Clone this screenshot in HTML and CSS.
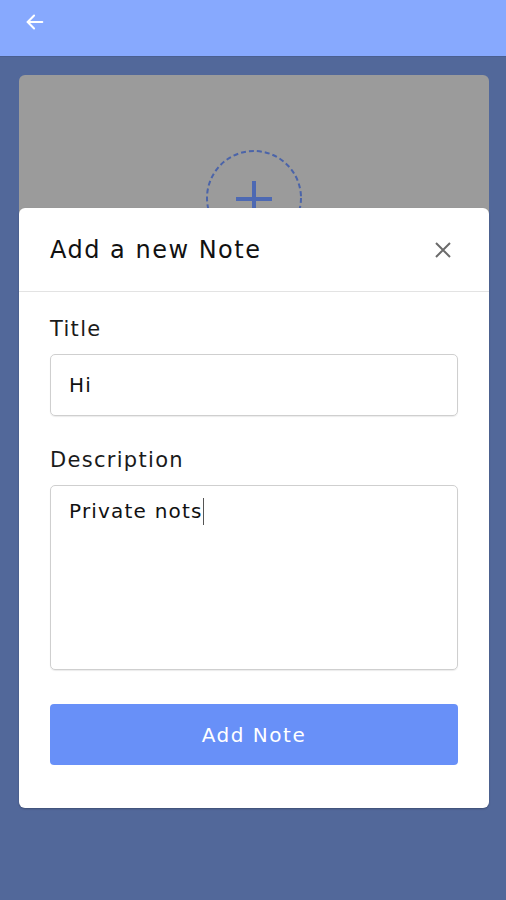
FILE: index.html
```html
<!DOCTYPE html>
<html lang="en">
<head>
    <meta charset="UTF-8">
    <meta name="viewport" content="width=device-width, initial-scale=1.0">
    <title>Notes - Add Note</title>
    <link rel="stylesheet" href="styles.css">
</head>
<body>
<!-- Top bar -->
<div class="topbar">
    <svg class="back" width="22" height="22" viewBox="0 0 24 24" fill="none" stroke="#ffffff" stroke-width="2.2" stroke-linecap="round" stroke-linejoin="round">
        <path d="M20 12H4"/>
        <path d="M11 5l-7 7 7 7"/>
    </svg>
</div>

<!-- Page content behind the dialog -->
<div class="page">
    <div class="image-card">
        <div class="upload">
            <svg width="98" height="98" viewBox="0 0 98 98" fill="none">
                <circle cx="49" cy="49" r="47" stroke="#4b64a9" stroke-width="2" stroke-dasharray="5 3"/>
                <path d="M49 32v36M31 50h36" stroke="#4d69b3" stroke-width="4"/>
            </svg>
        </div>
    </div>

    <!-- Dialog -->
    <div class="modal">
        <div class="modal-header">
            <h2>Add a new Note</h2>
            <svg class="close" width="18" height="18" viewBox="0 0 18 18" stroke="#6b6b6b" stroke-width="2">
                <path d="M2 2l14 14M16 2L2 16"/>
            </svg>
        </div>
        <div class="modal-body">
            <label class="label">Title</label>
            <div class="input">Hi</div>

            <label class="label">Description</label>
            <div class="input textarea">Private nots<span class="caret"></span></div>

            <div class="btn">Add Note</div>
        </div>
    </div>
</div>
</body>
</html>
```

FILE: styles.css
```css
* {
    box-sizing: border-box;
    margin: 0;
    padding: 0;
}
body {
    font-family: 'DejaVu Sans', 'Noto Sans', sans-serif;
    background-color: #52689a;
    width: 506px;
    height: 900px;
    overflow: hidden;
}

/* Top bar */
.topbar {
    height: 57px;
    background-color: #87a9fe;
    border-bottom: 1px solid #4a5f90;
    padding: 11px 0 0 24px;
}

/* Page */
.page {
    position: relative;
    padding: 18px 17px 0 19px;
    height: 843px;
}
.image-card {
    height: 260px;
    background-color: #9b9b9b;
    border-radius: 6px;
    display: flex;
    justify-content: center;
    padding-top: 74px;
}

/* Dialog */
.modal {
    position: absolute;
    top: 151px;
    left: 19px;
    right: 17px;
    height: 600px;
    background-color: #ffffff;
    border-radius: 6px;
    box-shadow: 0 1px 2px rgba(0, 0, 0, 0.25);
}
.modal-header {
    height: 84px;
    display: flex;
    align-items: center;
    justify-content: space-between;
    padding: 0 37px 0 31px;
    border-bottom: 1px solid #e3e3e3;
}
.modal-header h2 {
    font-size: 24px;
    font-weight: 400;
    color: #111111;
    letter-spacing: 1.5px;
}
.modal-body {
    padding: 23px 31px 0 31px;
    display: flex;
    flex-direction: column;
}
.label {
    font-size: 21px;
    color: #1a1a1a;
    margin-bottom: 11px;
    line-height: 28px;
    letter-spacing: 1.3px;
}
.input {
    height: 62px;
    border: 1px solid #cfcfcf;
    border-radius: 5px;
    padding: 0 18px;
    font-size: 20px;
    color: #111111;
    letter-spacing: 1.2px;
    display: flex;
    align-items: center;
    margin-bottom: 30px;
    box-shadow: 0 1px 1px rgba(0, 0, 0, 0.08);
}
.textarea {
    height: 185px;
    align-items: flex-start;
    padding-top: 13px;
    margin-bottom: 34px;
}
.caret {
    display: inline-block;
    width: 1px;
    height: 27px;
    background-color: #555555;
    margin-top: -1px;
}
.btn {
    height: 61px;
    background-color: #6890f8;
    border-radius: 4px;
    color: #ffffff;
    font-size: 20px;
    letter-spacing: 1.5px;
    display: flex;
    justify-content: center;
    align-items: center;
}
```
